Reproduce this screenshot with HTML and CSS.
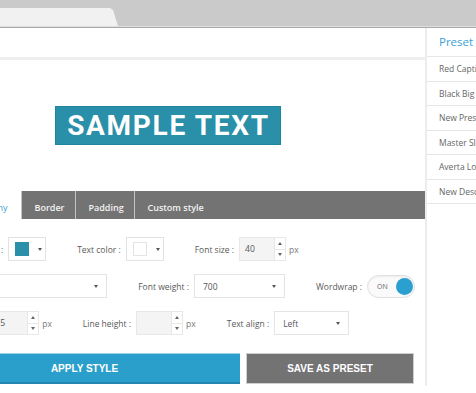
FILE: index.html
```html
<!DOCTYPE html>
<html lang="en">
<head>
  <meta charset="UTF-8">
  <meta name="viewport" content="width=device-width, initial-scale=1.0">
  <title>Layer Style Editor</title>
  <link rel="stylesheet" href="styles.css">
</head>
<body>
  <div class="topbar">
    <div class="browser-tab"></div>
  </div>

  <div class="workspace">
    <div class="editor">
      <div class="editor-head"></div>

      <div class="preview">
        <span class="sample">SAMPLE TEXT</span>
      </div>

      <div class="tabs">
        <div class="tab active">Typography</div>
        <div class="tab tab-border">Border</div>
        <div class="tab tab-padding">Padding</div>
        <div class="tab tab-custom">Custom style</div>
      </div>

      <div class="form">
        <div class="row row-1">
          <div class="field">
            <span class="label">Background color :</span>
            <div class="color-box"><span class="swatch teal"></span><span class="caret"></span></div>
          </div>
          <div class="field">
            <span class="label">Text color :</span>
            <div class="color-box"><span class="swatch white"></span><span class="caret"></span></div>
          </div>
          <div class="field">
            <span class="label">Font size :</span>
            <div class="number"><span class="value">40</span><span class="spin"><i class="up"></i><i class="down"></i></span></div>
            <span class="unit">px</span>
          </div>
        </div>

        <div class="row row-2">
          <div class="field">
            <span class="label">Font :</span>
            <div class="select select-family"><span class="value">Roboto</span><span class="caret"></span></div>
          </div>
          <div class="field">
            <span class="label">Font weight :</span>
            <div class="select select-weight"><span class="value">700</span><span class="caret"></span></div>
          </div>
          <div class="field">
            <span class="label">Wordwrap :</span>
            <div class="toggle"><span class="toggle-text">ON</span><span class="knob"></span></div>
          </div>
        </div>

        <div class="row row-3">
          <div class="field">
            <span class="label">Letter spacing :</span>
            <div class="number number-short"><span class="value">5</span><span class="spin"><i class="up"></i><i class="down"></i></span></div>
            <span class="unit">px</span>
          </div>
          <div class="field">
            <span class="label">Line height :</span>
            <div class="number"><span class="value"></span><span class="spin"><i class="up"></i><i class="down"></i></span></div>
            <span class="unit">px</span>
          </div>
          <div class="field">
            <span class="label">Text align :</span>
            <div class="select select-align"><span class="value">Left</span><span class="caret"></span></div>
          </div>
        </div>

        <div class="actions">
          <button class="btn btn-apply">APPLY STYLE</button>
          <button class="btn btn-save">SAVE AS PRESET</button>
        </div>
      </div>
    </div>

    <div class="presets">
      <div class="presets-title">Preset Styles</div>
      <div class="preset">Red Caption</div>
      <div class="preset">Black Big Title</div>
      <div class="preset">New Preset</div>
      <div class="preset">Master Slider Title</div>
      <div class="preset">Averta Logo</div>
      <div class="preset">New Description</div>
    </div>
  </div>
</body>
</html>
```

FILE: styles.css
```css
body {
  margin: 0;
  width: 476px;
  height: 393px;
  overflow: hidden;
  background: #fff;
  font-family: "Open Sans", "Liberation Sans", sans-serif;
  color: #555;
}

/* browser chrome strip */
.topbar {
  height: 26px;
  background: #cacaca;
  border-bottom: 1px solid #dedede;
  box-shadow: 0 1px 0 #a9a9a9;
  overflow: hidden;
}
.browser-tab {
  width: 118px;
  height: 18px;
  margin-top: 8px;
  background: #f1f1f1;
  clip-path: polygon(0 0, 110px 0, 113px 2px, 118px 100%, 0 100%);
}

.workspace {
  display: flex;
  height: 358px;
  margin-top: 1px;
}

.editor {
  flex: none;
  width: 514px;
  margin-left: -89px;
  padding: 0 11px 0 18px;
  box-sizing: border-box;
}
.editor-head {
  height: 29px;
  margin: 0 -11px 0 -18px;
  border-bottom: 3px solid #efefef;
}
.preview {
  height: 130px;
  display: flex;
  align-items: center;
  justify-content: center;
  margin-left: -18px;
  margin-right: -11px;
}
.sample {
  display: inline-block;
  height: 37px;
  line-height: 38px;
  padding: 0 10px 0 11px;
  background: #2a8fa8;
  border: 1px solid #1f84a0;
  color: #fff;
  font-family: Roboto, "Liberation Sans", sans-serif;
  font-weight: 700;
  font-size: 28px;
  letter-spacing: 1.7px;
}

/* tabs */
.tabs {
  display: flex;
  height: 28px;
  margin-top: 1px;
  margin-left: 16px;
  margin-right: -11px;
}
.tab {
  height: 28px;
  box-sizing: border-box;
  padding: 5px 13px 0;
  line-height: 23px;
  font-size: 9px;
  font-weight: 600;
  color: #f2f2f2;
  background: #737373;
  border-left: 1px solid #c4c4c4;
}
.tab.active {
  background: #fff;
  color: #3a9fd5;
  font-weight: 400;
  border-left: none;
}
.tab-border {
  width: 54px;
  text-align: center;
}
.tab-padding {
  width: 59px;
  text-align: center;
}
.tab-custom {
  flex: 1;
}

/* form rows */
.form {
  padding-top: 18px;
}
.row {
  display: flex;
  align-items: center;
  gap: 31px;
  height: 24px;
  margin-bottom: 13px;
}
.row-3 {
  margin-bottom: 18px;
}
.field {
  display: flex;
  align-items: center;
  gap: 5px;
  font-size: 8.5px;
}
.label {
  white-space: nowrap;
  color: #5a5a5a;
}
.unit {
  color: #777;
  margin-left: -2px;
}

.color-box {
  position: relative;
  width: 36px;
  height: 22px;
  border: 1px solid #e2e2e2;
  display: flex;
  align-items: center;
}
.swatch {
  width: 14px;
  height: 14px;
  margin-left: 6px;
  box-sizing: border-box;
}
.swatch.teal {
  background: #2a8fa8;
}
.swatch.white {
  background: #fff;
  border: 1px solid #e4e4e4;
}
.caret {
  width: 0;
  height: 0;
  border-left: 2.5px solid transparent;
  border-right: 2.5px solid transparent;
  border-top: 3px solid #555;
}
.color-box .caret {
  margin-left: 9px;
}

.number {
  display: flex;
  width: 45px;
  height: 22px;
  border: 1px solid #e8e8e8;
  background: #f4f4f4;
}
.number-short {
  width: 43px;
}
.number .value {
  flex: 1;
  padding-left: 5px;
  line-height: 22px;
  color: #555;
}
.spin {
  width: 10px;
  display: flex;
  flex-direction: column;
  background: #fff;
  border-left: 1px solid #e8e8e8;
}
.spin i {
  flex: 1;
  display: flex;
  align-items: center;
  justify-content: center;
}
.spin i.up {
  border-bottom: 1px solid #e8e8e8;
}
.spin i::before {
  content: "";
  border-left: 2px solid transparent;
  border-right: 2px solid transparent;
}
.spin i.up::before {
  border-bottom: 3px solid #666;
}
.spin i.down::before {
  border-top: 3px solid #666;
}

.select {
  display: flex;
  align-items: center;
  justify-content: space-between;
  height: 22px;
  padding: 0 8px;
  border: 1px solid #e4e4e4;
  background: #fff;
}
.select .value {
  color: #555;
}
.select-family {
  width: 133px;
}
.select-weight {
  width: 73px;
}
.select-align {
  width: 57px;
}

.toggle {
  position: relative;
  width: 46px;
  height: 21px;
  border: 1px solid #e0e0e0;
  border-radius: 12px;
  background: #fafafa;
  box-shadow: inset 0 1px 2px rgba(0, 0, 0, 0.06);
}
.toggle-text {
  position: absolute;
  left: 9px;
  top: 0;
  line-height: 21px;
  font-size: 7px;
  color: #666;
}
.knob {
  position: absolute;
  right: 1px;
  top: 2px;
  width: 17px;
  height: 17px;
  border-radius: 50%;
  background: #2b9fcf;
}

/* buttons */
.actions {
  display: flex;
  gap: 6px;
}
.btn {
  height: 31px;
  border: none;
  font-family: "Liberation Sans", Arial, sans-serif;
  font-weight: 700;
  font-size: 10px;
  color: #fff;
  cursor: pointer;
}
.btn-apply {
  flex: 1;
  background: #2b9fcb;
  border-top: 1px solid #9fd0e4;
  border-bottom: 2px solid #2385b0;
}
.btn-save {
  width: 168px;
  background: #737373;
  border: 1px solid #cfcfcf;
}

/* preset list */
.presets {
  flex: 1;
  border-left: 2px solid #ececec;
  overflow: hidden;
}
.presets-title {
  height: 28px;
  line-height: 28px;
  padding-left: 12px;
  font-size: 11.5px;
  color: #3a9fd5;
  border-bottom: 1px solid #e6e6e6;
  white-space: nowrap;
}
.preset {
  height: 24.5px;
  line-height: 24px;
  box-sizing: border-box;
  padding-left: 12px;
  font-size: 8.5px;
  color: #666;
  border-bottom: 1px solid #e6e6e6;
  white-space: nowrap;
}
```
